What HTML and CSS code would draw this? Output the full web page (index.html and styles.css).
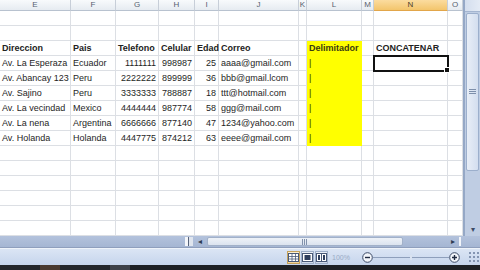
FILE: index.html
```html
<!DOCTYPE html>
<html lang="es">
<head>
<meta charset="utf-8">
<title>Excel - Concatenar</title>
<link rel="stylesheet" href="styles.css">
</head>
<body>
<div class="app">
  <div class="main">
    <div class="sheet">
      <div class="row hdr">
        <div>E</div><div>F</div><div>G</div><div>H</div><div>I</div><div>J</div><div>K</div><div>L</div><div>M</div><div class="on">N</div><div>O</div>
      </div>
      <div class="row"><div></div><div></div><div></div><div></div><div></div><div></div><div></div><div></div><div></div><div></div><div></div></div>
      <div class="row"><div></div><div></div><div></div><div></div><div></div><div></div><div></div><div></div><div></div><div></div><div></div></div>
      <div class="row titles"><div>Direccion</div><div>Pais</div><div>Telefono</div><div>Celular</div><div>Edad</div><div>Correo</div><div></div><div class="y">Delimitador</div><div></div><div>CONCATENAR</div><div></div></div>
      <div class="row"><div>Av. La Esperaza</div><div>Ecuador</div><div class="r">1111111</div><div class="r">998987</div><div class="r">25</div><div>aaaa@gmail.com</div><div></div><div class="y">|</div><div></div><div class="sel"></div><div></div></div>
      <div class="row"><div>Av. Abancay 123</div><div>Peru</div><div class="r">2222222</div><div class="r">899999</div><div class="r">36</div><div>bbb@gmail.lcom</div><div></div><div class="y">|</div><div></div><div></div><div></div></div>
      <div class="row"><div>Av. Sajino</div><div>Peru</div><div class="r">3333333</div><div class="r">788887</div><div class="r">18</div><div>ttt@hotmail.com</div><div></div><div class="y">|</div><div></div><div></div><div></div></div>
      <div class="row"><div>Av. La vecindad</div><div>Mexico</div><div class="r">4444444</div><div class="r">987774</div><div class="r">58</div><div>ggg@mail.com</div><div></div><div class="y">|</div><div></div><div></div><div></div></div>
      <div class="row"><div>Av. La nena</div><div>Argentina</div><div class="r">6666666</div><div class="r">877140</div><div class="r">47</div><div>1234@yahoo.com</div><div></div><div class="y">|</div><div></div><div></div><div></div></div>
      <div class="row"><div>Av. Holanda</div><div>Holanda</div><div class="r">4447775</div><div class="r">874212</div><div class="r">63</div><div>eeee@gmail.com</div><div></div><div class="y">|</div><div></div><div></div><div></div></div>
      <div class="row"><div></div><div></div><div></div><div></div><div></div><div></div><div></div><div></div><div></div><div></div><div></div></div>
      <div class="row"><div></div><div></div><div></div><div></div><div></div><div></div><div></div><div></div><div></div><div></div><div></div></div>
      <div class="row"><div></div><div></div><div></div><div></div><div></div><div></div><div></div><div></div><div></div><div></div><div></div></div>
      <div class="row"><div></div><div></div><div></div><div></div><div></div><div></div><div></div><div></div><div></div><div></div><div></div></div>
      <div class="row"><div></div><div></div><div></div><div></div><div></div><div></div><div></div><div></div><div></div><div></div><div></div></div>
      <div class="row"><div></div><div></div><div></div><div></div><div></div><div></div><div></div><div></div><div></div><div></div><div></div></div>
    </div>
    <div class="vscroll">
      <div class="vbtn"></div>
      <div class="vthumb"><span class="grip"></span></div>
      <div class="vtrack"></div>
      <div class="vbtn down">▾</div>
    </div>
  </div>
  <div class="hbar">
    <div class="tabs"></div>
    <div class="split"></div>
    <div class="harrow">◂</div>
    <div class="hthumb"><span class="hgrip"></span></div>
    <div class="htrack"></div>
    <div class="harrow r">▸</div>
    <div class="hmark"></div>
    <div class="corner"></div>
  </div>
  <div class="status">
    <div class="views">
      <div class="vb on">
        <svg width="11" height="9" viewBox="0 0 11 9"><rect x="0.5" y="0.5" width="10" height="8" fill="#fff" stroke="#4a5a78"/><path d="M0.5 3.5H10.5M0.5 6H10.5M4 0.5V8.5M7.5 0.5V8.5" stroke="#4a5a78" stroke-width="0.8"/></svg>
      </div>
      <div class="vb">
        <svg width="11" height="9" viewBox="0 0 11 9"><rect x="0.5" y="0.5" width="10" height="8" fill="#fff" stroke="#4a5a78"/><rect x="2.5" y="2" width="6" height="5" fill="#2e3e5c"/></svg>
      </div>
      <div class="vb">
        <svg width="11" height="9" viewBox="0 0 11 9"><rect x="0.5" y="0.5" width="10" height="8" fill="#fff" stroke="#4a5a78"/><path d="M5.5 0.5V8.5" stroke="#4a5a78"/><rect x="2" y="2" width="2" height="5" fill="#2e3e5c"/><rect x="7" y="2" width="2" height="5" fill="#2e3e5c"/></svg>
      </div>
    </div>
    <div class="zoomtxt">100%</div>
    <div class="zbtn">
      <svg width="11" height="11" viewBox="0 0 11 11"><circle cx="5.5" cy="5.5" r="4.8" fill="#f3f6fb" stroke="#3b4a66"/><path d="M3 5.5H8" stroke="#1f2a40" stroke-width="1.4"/></svg>
    </div>
    <div class="slider"><span class="tick"></span></div>
    <div class="zbtn">
      <svg width="11" height="11" viewBox="0 0 11 11"><circle cx="5.5" cy="5.5" r="4.8" fill="#f3f6fb" stroke="#3b4a66"/><path d="M3 5.5H8M5.5 3V8" stroke="#1f2a40" stroke-width="1.4"/></svg>
    </div>
    <div class="sgrip"></div>
  </div>
  <div class="taskbar"></div>
</div>
</body>
</html>
```

FILE: styles.css
```css
* { box-sizing: border-box; }
html, body { margin: 0; padding: 0; }
body {
  width: 480px;
  height: 270px;
  overflow: hidden;
  background: #fff;
  font-family: "Liberation Sans", Arial, sans-serif;
}
.app {
  display: grid;
  grid-template-rows: 236px 12px 17px 5px;
  width: 480px;
  height: 270px;
}
.main {
  display: flex;
}
.sheet {
  width: 463px;
  display: flex;
  flex-direction: column;
}
.row {
  display: grid;
  grid-template-columns: 71px 45px 43px 36px 24px 80px 8px 55px 12px 74px 15px;
  height: 15px;
}
.row > div {
  border-right: 1px solid #dcdfe4;
  border-bottom: 1px solid #dcdfe4;
  font-size: 9px;
  line-height: 14px;
  padding: 0 2px;
  color: #1e1e1e;
  white-space: nowrap;
}
.row > div.r { text-align: right; }
.titles > div { font-weight: 700; color: #222; }
.row > div.y {
  background: #ffff00;
  border-right-color: #ffff00;
  border-bottom-color: #ffff00;
  color: #3a3a10;
}
.row > div.sel {
  position: relative;
  outline: 2px solid #111;
  outline-offset: -1px;
}
.row > div.sel::after {
  content: "";
  position: absolute;
  right: -3px;
  bottom: -3px;
  width: 4px;
  height: 4px;
  background: #111;
  border: 1px solid #fff;
}
.hdr { height: 11px; }
.hdr > div {
  background: linear-gradient(#f8fafc, #e6ebf1);
  border-right: 1px solid #c7ced8;
  border-bottom: 1px solid #b8c2cf;
  font-size: 8px;
  line-height: 10px;
  text-align: center;
  color: #56616f;
  padding: 0;
}
.hdr > div.on {
  background: linear-gradient(#fbdc9f, #f3c56c);
  color: #4a3f2c;
  border-bottom-color: #e2a64a;
}

/* vertical scrollbar */
.vscroll {
  width: 17px;
  display: flex;
  flex-direction: column;
  background: #bfcde3;
  border-left: 2px solid #95a8c6;
}
.vbtn {
  height: 12px;
  background: linear-gradient(90deg, #d4deee, #e4ebf5);
  border-bottom: 1px solid #a4b5d0;
  font-size: 8px;
  line-height: 12px;
  text-align: center;
  color: #3c4b66;
}
.vbtn.down {
  background: transparent;
  border: 0;
  line-height: 12px;
}
.vthumb {
  height: 158px;
  margin: 1px 1px 0 1px;
  background: linear-gradient(90deg, #e8eef7, #d3deef);
  border: 1px solid #9cafcc;
  border-radius: 2px;
  display: flex;
  align-items: center;
  justify-content: center;
}
.grip {
  width: 7px;
  height: 6px;
  background: repeating-linear-gradient(#7d8fab 0 1px, transparent 1px 2px);
}
.vtrack { flex: 1; }

/* horizontal scroll row */
.hbar {
  display: flex;
  background: linear-gradient(#b3c2dc, #a5b6d3);
  border-bottom: 1px solid #8f9fbd;
}
.tabs { width: 185px; }
.split {
  width: 8px;
  margin: 1px 0;
  background: linear-gradient(90deg, #f4f6fa 0 3px, #56627a 3px 4px, #dfe5ee 4px);
}
.harrow {
  width: 14px;
  font-size: 8px;
  line-height: 11px;
  text-align: center;
  color: #2f3b52;
}
.harrow.r { width: 11px; }
.hthumb {
  width: 196px;
  margin: 1px 0;
  background: linear-gradient(#eef2f8, #dbe3ef);
  border: 1px solid #a2b1c9;
  border-radius: 2px;
  display: flex;
  align-items: center;
  justify-content: center;
}
.hgrip {
  width: 6px;
  height: 6px;
  background: repeating-linear-gradient(90deg, #8191ab 0 1px, transparent 1px 2px);
}
.htrack { width: 44px; }
.hmark {
  width: 5px;
  margin: 1px 0;
  background: linear-gradient(90deg, transparent 0 1px, #f2f5fa 1px 3px, transparent 3px);
}
.corner { width: 17px; }

/* status bar */
.status {
  display: flex;
  align-items: center;
  padding-left: 287px;
  background: linear-gradient(#dbe5f4, #c6d5ec);
  border-top: 1px solid #eef3fa;
}
.views {
  display: flex;
  gap: 1px;
  height: 13px;
}
.vb {
  width: 13px;
  height: 13px;
  display: flex;
  align-items: center;
  justify-content: center;
  background: linear-gradient(#e9eef6, #cfdaea);
  border: 1px solid #9eafc9;
}
.vb.on { background: linear-gradient(#fdf0d2, #f4d69b); border-color: #c5a25c; }
.zoomtxt {
  margin-left: 4px;
  width: 22px;
  font-size: 7px;
  color: #9aabc6;
}
.zbtn {
  margin-left: 8px;
  width: 11px;
  height: 11px;
  display: flex;
}
.slider {
  width: 76px;
  height: 11px;
  display: flex;
  align-items: center;
  justify-content: center;
  background: linear-gradient(transparent 5px, #8e9fbb 5px 6px, transparent 6px);
}
.slider + .zbtn { margin-left: 0; }
.tick {
  width: 2px;
  height: 5px;
  background: #d9e2f0;
}
.sgrip {
  margin-left: auto;
  width: 12px;
  height: 12px;
  background: radial-gradient(circle, #8495b2 0.8px, transparent 1.2px) 0 0 / 4px 4px;
}
.taskbar {
  background: linear-gradient(90deg, #23262b 0 40px, #4a3a30 40px 60px, #23262b 60px 110px, #3c4048 110px 130px, #1d2025 130px);
}
```
